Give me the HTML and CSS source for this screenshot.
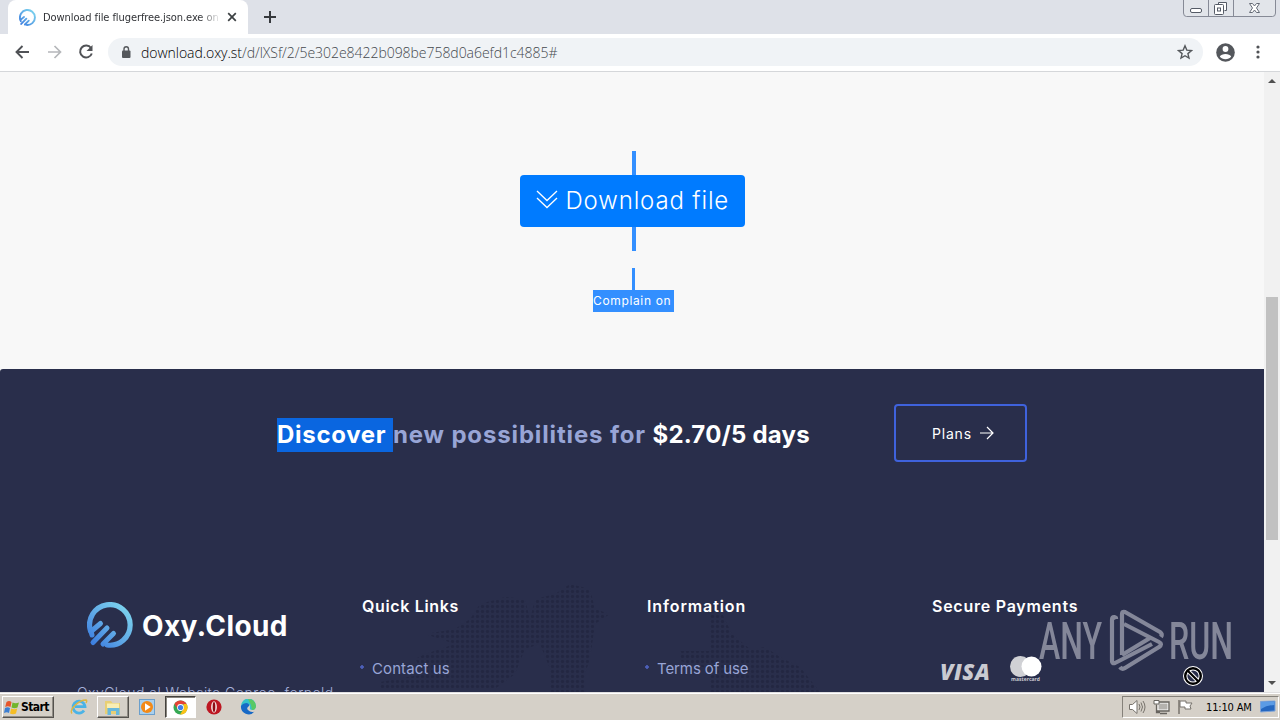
FILE: index.html
```html
<!DOCTYPE html>
<html lang="en">
<head>
<meta charset="utf-8">
<title>Download file</title>
<link rel="stylesheet" href="styles.css">
</head>
<body>
<svg width="0" height="0" class="defs">
  <defs>
    <linearGradient id="oxy" gradientUnits="userSpaceOnUse" x1="6" y1="42" x2="40" y2="6"><stop offset="0" stop-color="#3d7fe0"/><stop offset=".45" stop-color="#5fa8e6"/><stop offset="1" stop-color="#7bd2ee"/></linearGradient>
    <symbol id="logo" viewBox="0 0 46 46">
      <path d="M3.500 29A20.300 20.300 0 1 1 20 43" fill="none" stroke="url(#oxy)" stroke-width="5.200" stroke-linecap="round"/>
      <path d="M13.500 21.500L4 29.500l1 3.500M20 26L6 40.500M26.500 31.500L16 42" fill="none" stroke="url(#oxy)" stroke-width="5" stroke-linecap="round" stroke-linejoin="round"/>
    </symbol>
  </defs>
</svg>
<div class="desktop">
  <header class="tabs">
    <div class="tab">
      <svg class="favicon" width="17" height="17"><use href="#logo"/></svg>
      <span class="tab-title">Download file flugerfree.json.exe on</span>
      <svg class="tab-close" width="10" height="10" viewBox="0 0 10 10"><path d="M1.200 1.200l7.600 7.600M8.800 1.200l-7.600 7.600" stroke="#3c4043" stroke-width="1.700"/></svg>
    </div>
    <svg class="new-tab" width="12" height="12" viewBox="0 0 12 12"><path d="M6 0v12M0 6h12" stroke="#36393d" stroke-width="2"/></svg>
    <svg class="window-buttons" width="94" height="18" viewBox="0 0 94 18">
      <path d="M.5 0v13q0 3.500 3 3.500h86q3 0 3-3.500V0M25.500 0v16.500M50.500 0v16.500" fill="#e2e5ea" stroke="#868a96"/>
      <rect x="7.500" y="8.500" width="11" height="4" rx="1.500" fill="#fff" stroke="#555b66"/>
      <path d="M35.500 4.500v-2h8v8h-2" fill="#fff" stroke="#555b66"/><rect x="31.500" y="4.500" width="9" height="10" rx="1" fill="#fff" stroke="#555b66"/><rect x="34.500" y="8" width="3" height="3" fill="none" stroke="#555b66"/>
      <path d="M66.500 3.500h3l2 2.500 2-2.500h3l-3 4.500 3 4.500h-3l-2-2.500-2 2.500h-3l3-4.500z" fill="#fff" stroke="#656b76"/>
    </svg>
  </header>
  <nav class="toolbar">
    <svg width="15" height="14" viewBox="0 0 15 14"><path d="M14 7H2M7.500 1L1.500 7l6 6" fill="none" stroke="#505256" stroke-width="1.900"/></svg>
    <svg width="15" height="14" viewBox="0 0 15 14"><path d="M1 7h12M7.500 1l6 6-6 6" fill="none" stroke="#b5b7ba" stroke-width="1.700"/></svg>
    <svg class="reload" width="16" height="16" viewBox="0 0 16 16"><path d="M13 4A6 6 0 1 0 13.800 9.500" fill="none" stroke="#505256" stroke-width="2"/><path d="M14.500 1v6h-6z" fill="#505256"/></svg>
    <div class="omnibox">
      <svg width="10" height="12" viewBox="0 0 10 12"><rect x="1" y="4.500" width="8.500" height="7.500" rx="1" fill="#55585c"/><path d="M3 5V3a2.200 2.200 0 0 1 4.500 0v2" fill="none" stroke="#55585c" stroke-width="1.400"/></svg>
      <span class="url"><span class="host">download.oxy.st</span>/d/lXSf/2/5e302e8422b098be758d0a6efd1c4885#</span>
      <svg class="star" width="16" height="16" viewBox="0 0 16 16"><path d="M8 1.800l1.800 4.300 4.700.4-3.600 3.100 1.100 4.500L8 11.700l-4 2.400 1.100-4.500L1.500 6.500l4.700-.4z" fill="none" stroke="#55585c" stroke-width="1.400"/></svg>
    </div>
    <svg class="profile" width="19" height="19" viewBox="0 0 19 19"><circle cx="9.500" cy="9.500" r="9.300" fill="#54575c"/><circle cx="9.500" cy="6" r="2.900" fill="#fff"/><path d="M3.800 13.500c1.500-3.500 9.900-3.500 11.400 0-2.500 3.700-8.900 3.700-11.400 0z" fill="#fff"/></svg>
    <svg class="more" width="4" height="14" viewBox="0 0 4 14"><g fill="#505256"><circle cx="2" cy="2" r="1.600"/><circle cx="2" cy="7" r="1.600"/><circle cx="2" cy="12" r="1.600"/></g></svg>
  </nav>
  <div class="viewport">
    <main class="page">
      <section class="download">
        <i class="rail"></i>
        <a class="download-button">
          <svg width="22" height="20" viewBox="0 0 22 20"><path d="M1 2l10 9.500L21 2M1 9l10 9.500L21 9" fill="none" stroke="#fff" stroke-width="1.300"/></svg>
          <span>Download file</span>
        </a>
        <i class="rail"></i>
        <i class="rail rail-short"></i>
        <a class="complain">Complain on</a>
      </section>
      <footer class="footer">
        <div class="promo">
          <h2><mark>Discover </mark><span>new possibilities for</span> <b>$2.70/5 days</b></h2>
          <a class="plans"><span>Plans</span><svg width="14" height="14" viewBox="0 0 14 14"><path d="M0 7h12.500M7 1l6 6-6 6" fill="none" stroke="#fff" stroke-width="1.200"/></svg></a>
        </div>
        <svg class="map" width="560" height="108" viewBox="0 0 560 108">
          <defs><pattern id="dots" width="5" height="5" patternUnits="userSpaceOnUse"><circle cx="2.500" cy="2.500" r="1.700" fill="#232742"/></pattern></defs>
          <path fill="url(#dots)" d="M100 35l10-15 25-7 20 2 5 20 5-20 20-5 15-10 20 5 5 20 15 5-15 10-5 35-5 15v20H180V85l-10-25-15 5-10 25-20 15H10V98l45-8-10-15 10-5 30-10-30-10 30-5zM340 25h10l12 25 18 15 15-2 15 10 20 10 20 25H340V85l-30-8v-10h30z"/>
        </svg>
        <div class="columns">
          <div class="col brand">
            <div class="brand-logo"><svg width="46" height="46"><use href="#logo"/></svg><span>Oxy.Cloud</span></div>
            <p>OxyCloud al Website Conroe, forneld</p>
          </div>
          <div class="col"><h3 class="h-quick">Quick Links</h3><a class="link contact">Contact us</a></div>
          <div class="col"><h3 class="h-info">Information</h3><a class="link terms">Terms of use</a></div>
          <div class="col"><h3 class="h-pay">Secure Payments</h3>
            <div class="cards">
              <span class="visa">VISA</span>
              <svg width="34" height="27" viewBox="0 0 34 27"><circle cx="11.500" cy="10.500" r="10.500" fill="#d0d1d5"/><circle cx="22.500" cy="10.500" r="10" fill="#fff"/><text class="mc" x="2" y="25" textLength="29">mastercard</text></svg>
            </div>
          </div>
        </div>
      </footer>
    </main>
    <aside class="scrollbar">
      <svg width="8" height="4" viewBox="0 0 8 4"><path d="M0 4l4-4 4 4z" fill="#505050"/></svg>
      <i class="thumb"></i>
      <svg width="8" height="4" viewBox="0 0 8 4"><path d="M0 0l4 4 4-4z" fill="#505050"/></svg>
    </aside>
  </div>
  <footer class="taskbar">
    <div class="start"><svg width="16" height="15" viewBox="0 0 16 15"><path d="M2.500 2q2.500-2 5 0L6.500 7Q4 5.500 1.200 7z" fill="#e7562b"/><path d="M8.500 2.500q3 1.500 6.500 0L13.500 7.500q-3 1.500-6 0z" fill="#72b52c"/><path d="M1 8q2.500-1.500 5 0L5 13Q3 11.500 0 13z" fill="#3d7fd2"/><path d="M7.200 8.500q3 1.500 6 0L12 13.500q-3 1.500-6 0z" fill="#f5bd24"/></svg><span>Start</span></div>
    <div class="task"><svg width="18" height="18" viewBox="0 0 18 18"><path d="M14 12.500A6 6 0 1 1 15 8.700H5" fill="none" stroke="#4bb3e6" stroke-width="2.800"/><path d="M2 15.500C-1 12 8 2 16 2q1.500.5 0 3" fill="none" stroke="#dfb640" stroke-width="1.400"/></svg></div>
    <div class="task raised"><svg width="18" height="17" viewBox="0 0 18 17"><path d="M1 2h6l1.500 2H16v11H1z" fill="#e8cf74"/><path d="M3 4.500h12V9H3z" fill="#f8eeb4"/><path d="M3.500 16V9h12v7H12v-4H7v4z" fill="#68b8dc"/></svg></div>
    <div class="task"><svg width="16" height="16" viewBox="0 0 16 16"><rect x=".5" y=".5" width="15" height="15" fill="#a9d0ee" stroke="#6b9fcc"/><circle cx="8" cy="8" r="6" fill="#f38a18"/><path d="M6 4.300v7.400L11.700 8z" fill="#fff"/></svg></div>
    <div class="task active"><svg width="15" height="15" viewBox="0 0 15 15"><circle cx="7.500" cy="7.500" r="7" fill="#35a853"/><path d="M1.400 4A7 7 0 0 1 13.600 4L7.500 4.500 5 9.500z" fill="#e54335"/><path d="M13.600 4A7 7 0 0 1 7 14.500L10.500 9V4z" fill="#fbc116"/><circle cx="7.500" cy="7.500" r="3.400" fill="#fff"/><circle cx="7.500" cy="7.500" r="2.600" fill="#3f7ee8"/></svg></div>
    <div class="task"><svg width="16" height="16" viewBox="0 0 16 16"><circle cx="8" cy="8" r="7.600" fill="#bd1722"/><ellipse cx="8" cy="8" rx="2.900" ry="5.800" fill="#f5e1e1"/><ellipse cx="8" cy="8" rx="1.300" ry="5" fill="#8e0c14"/></svg></div>
    <div class="task"><svg width="17" height="16" viewBox="0 0 17 16"><path d="M1 7a7.500 7.500 0 0 1 15 0q0 4-4 4-3 0-2-3 0-3-3-3-4 0-6 3z" fill="#36c2c9"/><path d="M8 0a7.500 7.500 0 0 1 8 7q0 4-4 4l-1-5z" fill="#5ac864"/><path d="M1 7q2-3 6-3 3 1 2 3-3 2-1 4 3 3 6.500 1.500A7.600 7.600 0 0 1 1 7z" fill="#1769c6"/></svg></div>
    <div class="tray">
      <svg width="18" height="16" viewBox="0 0 18 16"><path d="M1.500 5.500h3L9 1.500v13l-4.500-4h-3z" fill="#fff" stroke="#77736c"/><path d="M11 5q2 3 0 6M13 3.500q3 4.500 0 9M15 2q4 6 0 12" fill="none" stroke="#77736c"/></svg>
      <svg width="17" height="16" viewBox="0 0 17 16"><rect x="5" y="4" width="10" height="7" fill="#b4b2ae" stroke="#fff"/><path d="M5 3H16v9H4M7 14.500h7M3.500 5.500v8H7" fill="none" stroke="#67645f" stroke-width="1.300"/><path d="M1 1.500h5V5H1z" fill="#fff" stroke="#67645f"/></svg>
      <svg width="16" height="16" viewBox="0 0 16 16"><path d="M2 1v14" stroke="#77736c" stroke-width="1.500"/><path d="M3 2h6v2h6l-2 3 1 3H8V8H3z" fill="#fff" stroke="#77736c"/></svg>
      <span class="clock">11:10 AM</span>
      <svg width="16" height="14" viewBox="0 0 16 14"><path d="M.5 1.500L15 1v10L.5 12z" fill="#2567c0" stroke="#7fa4d8"/><path d="M1 2l13.500-.5V5Q7 5 1 9z" fill="#5b9be5"/></svg>
    </div>
  </footer>
  <svg class="watermark" width="200" height="64" viewBox="0 0 200 64">
    <g class="wm-text"><text x="1" y="50" textLength="63" lengthAdjust="spacingAndGlyphs">ANY</text><text x="131" y="50" textLength="64" lengthAdjust="spacingAndGlyphs">RUN</text></g>
    <g fill="none" stroke="#898c9e" stroke-width="4.200" stroke-linejoin="round"><path d="M78 10V9l-2-1q-2 0-2 3v41q0 3 3 2l37-19"/><path d="M84 46V5q0-3 3-2l35 20q3 2 1 5"/><path d="M86 15l35 18q4 2 0 5L87 59q-3 2-5-1"/><path d="M84 46l28-17"/></g>
  </svg>
  <svg class="cursor" width="20" height="20" viewBox="0 0 20 20"><circle cx="10" cy="10" r="7.800" fill="none" stroke="#fff" stroke-width="4.400"/><path d="M5 5l10 10" stroke="#fff" stroke-width="4"/><circle cx="10" cy="10" r="7.800" fill="none" stroke="#000" stroke-width="2.400"/><path d="M5 5l10 10" stroke="#000" stroke-width="2.200"/></svg>
</div>
</body>
</html>
```
FILE: styles.css
```css
* { box-sizing: border-box; }
body { margin: 0; font-family: Inter, "Liberation Sans", sans-serif; }
svg { display: block; flex: none; }
.defs { position: absolute; }
.desktop { position: relative; width: 1280px; height: 720px; overflow: hidden; display: flex; flex-direction: column; }

.tabs { height: 34px; flex: none; background: #dee1e8; display: flex; padding-left: 8px; }
.tab { width: 240px; height: 34px; background: #fff; border-radius: 8px 8px 0 0; display: flex; align-items: center; padding-left: 11px; }
.tab-title { font: 11px "DejaVu Sans Condensed", "DejaVu Sans", sans-serif; font-stretch: condensed; letter-spacing: -.08px; color: #303236; margin-left: 7px; width: 178px; overflow: hidden; white-space: nowrap; -webkit-mask-image: linear-gradient(90deg, #000 88%, transparent); mask-image: linear-gradient(90deg, #000 88%, transparent); }
.tab-close { margin-left: 6px; }
.new-tab { margin: 11px 0 0 16px; }
.window-buttons { margin-left: auto; margin-right: 3px; }

.toolbar { height: 38px; flex: none; background: #fff; border-bottom: 1px solid #d5d7da; display: flex; align-items: center; gap: 17px; padding: 0 0 1px 15px; }
.reload { margin-left: -1px; }
.omnibox { width: 1095px; height: 28px; margin-left: -3px; border-radius: 14px; background: #f0f3f6; display: flex; align-items: center; padding: 0 10px 0 13px; }
.url { font: 300 14px "Open Sans", "Noto Sans", sans-serif; letter-spacing: -.04px; color: #44484d; margin-left: 10px; white-space: nowrap; }
.host { color: #000; }
.star { margin-left: auto; }
.profile { margin-left: -4px; }
.more { margin-left: 4px; }

.viewport { height: 620px; flex: none; display: flex; }
.page { width: 1264px; overflow: hidden; background: #f8f8f8; }
.download { height: 297px; padding-top: 79px; display: flex; flex-direction: column; align-items: center; }
.rail { width: 4px; height: 24px; background: #338fff; margin-left: 4px; }
.rail-short { width: 3px; height: 22px; margin-top: 17px; margin-left: 2px; }
.download-button { width: 225px; height: 52px; border-radius: 4px; background: #007bff; color: #fff; display: flex; align-items: center; padding-left: 16px; gap: 8px; font-size: 24px; font-weight: 300; letter-spacing: .85px; white-space: nowrap; }
.download-button span { margin-top: -2px; }
.download-button svg { margin-top: -4px; }
.complain { width: 81px; height: 22px; margin-left: 3px; background: #338fff; color: #fff; font-size: 12px; letter-spacing: .65px; line-height: 22px; white-space: nowrap; }

.footer { position: relative; height: 323px; background: #292e4b; border-radius: 3px 0 0 0; overflow: hidden; }
.promo { display: flex; align-items: center; height: 58px; margin: 35px 0 0 277px; }
.promo h2 { width: 617px; margin: 3px 0 0; font-size: 24px; line-height: 34px; font-weight: 700; letter-spacing: .85px; color: #fff; white-space: pre; }
.promo mark { display: inline-block; background: #0a66e0; color: #fff; width: 116px; letter-spacing: .7px; }
.promo h2 span { color: #98a5d6; }
.promo b { font-weight: 700; letter-spacing: .2px; }
.plans { width: 133px; height: 58px; border: 2px solid #3f62dc; border-radius: 4px; color: #fff; display: flex; align-items: center; padding-left: 36px; gap: 8px; font-size: 14px; letter-spacing: .8px; }
.map { position: absolute; left: 370px; top: 215px; }
.columns { position: relative; width: 1140px; margin: 134px 0 0 62px; display: grid; grid-template-columns: repeat(4, 285px); }
.col { padding: 0 15px; }
.col h3 { margin: 0; font-size: 16px; line-height: 20px; font-weight: 600; color: #fff; white-space: nowrap; }
.h-quick { letter-spacing: .65px; }
.h-info { letter-spacing: .9px; }
.h-pay { letter-spacing: .75px; }
.brand-logo { display: flex; align-items: center; gap: 9px; padding-left: 10px; margin-top: 6px; color: #fff; font-size: 28px; font-weight: 700; letter-spacing: .4px; }
.brand-logo span { margin-top: 2px; }
.brand p { margin: 34px 0 0; font-size: 14px; line-height: 22px; font-weight: 300; letter-spacing: .45px; color: #a5b0da; white-space: nowrap; }
.link { display: block; margin: 42px 0 0 -2px; padding-left: 12px; font-size: 15px; line-height: 22px; color: #98a5d6; white-space: nowrap; background: radial-gradient(circle, #4c5fb8 1.5px, transparent 2px) 0 7px / 4px 4px no-repeat; }
.contact { letter-spacing: .1px; }
.terms { letter-spacing: -.1px; }
.cards { display: flex; margin-top: 40px; gap: 16px; padding-left: 8px; }
.visa { width: 53px; font: italic 800 22px/32px "Open Sans", sans-serif; letter-spacing: .5px; margin-top: -1px; color: #c9cad1; }
.mc { font: 700 5px "Open Sans", sans-serif; fill: #c9cad1; }

.scrollbar { width: 16px; background: #f1f1f1; display: flex; flex-direction: column; align-items: center; padding: 7px 0 7px; }
.thumb { width: 12px; height: 243px; background: #c1c1c1; margin: 214px 0 auto; }

.taskbar { height: 28px; flex: none; background: #d5d0c8; border-top: 1px solid #e0dfe0; box-shadow: inset 0 1px #fff; display: flex; align-items: center; padding: 1px 0 0 2px; }
.start { width: 52px; height: 22px; border: 1px solid; border-color: #fff #55524e #55524e #fff; box-shadow: inset -1px -1px #918d86; display: flex; align-items: center; padding-left: 1px; gap: 1px; font: 700 12px "DejaVu Sans Condensed", sans-serif; font-stretch: condensed; letter-spacing: -.55px; margin-right: 9px; }
.task { width: 32px; height: 22px; margin-right: 2px; display: flex; align-items: center; justify-content: center; }
.raised { border: 1px solid; border-color: #fff #55524e #55524e #fff; box-shadow: inset -1px -1px #918d86; }
.active { width: 31px; background: #fff; border: 1px solid; border-color: #44423e #fff #fff #44423e; box-shadow: inset 1px 1px #88857e; }
.tray { margin-left: auto; width: 157px; height: 22px; margin-right: 1px; border: 1px solid; border-color: #85817a #fff #fff #85817a; display: flex; align-items: center; gap: 7px; padding-left: 5px; }
.clock { width: 47px; margin: 0 0 0 6px; font: 11px "DejaVu Sans Condensed", sans-serif; font-stretch: condensed; letter-spacing: -.15px; white-space: nowrap; }
.watermark { position: absolute; left: 1038px; top: 609px; opacity: .95; }
.wm-text { font: 500 51px Roboto, sans-serif; fill: #898c9e; }
.cursor { position: absolute; left: 1183px; top: 666px; }
```
